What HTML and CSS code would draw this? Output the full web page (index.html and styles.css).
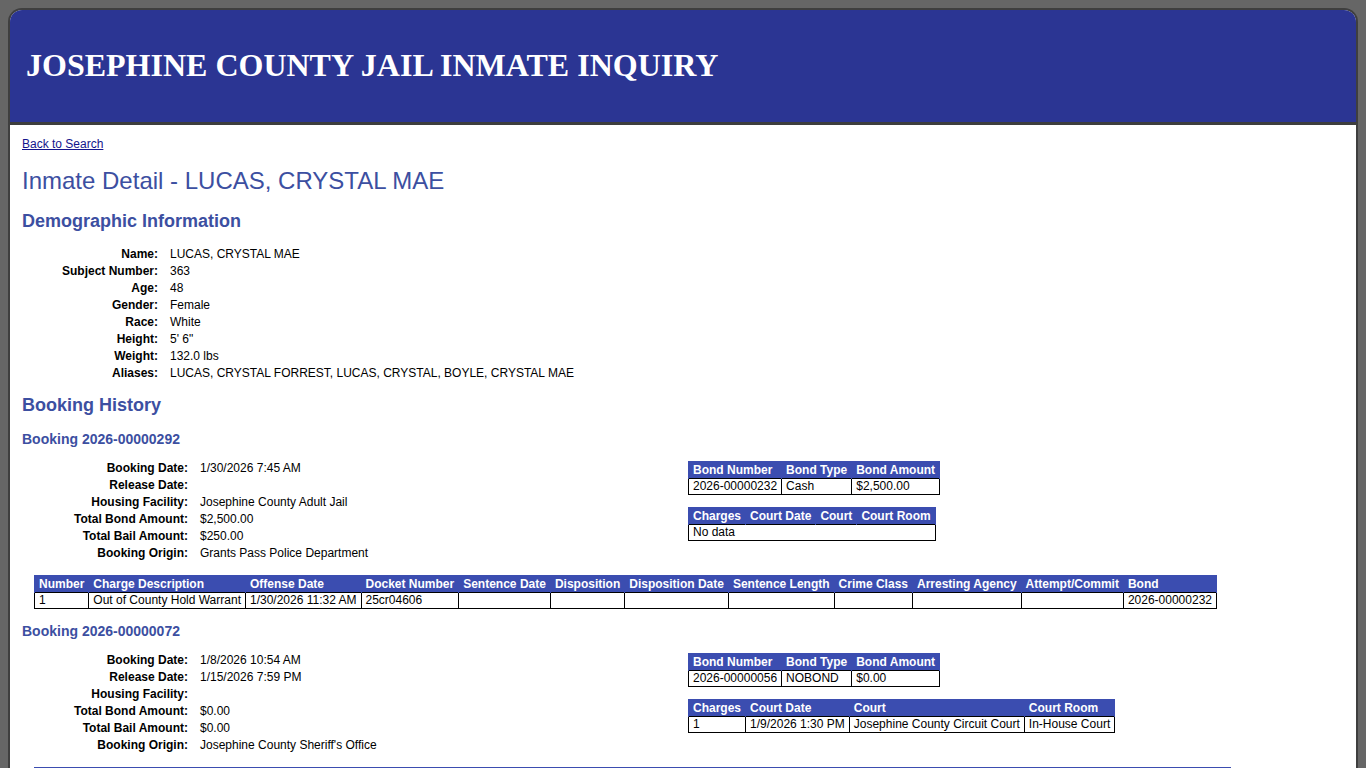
FILE: index.html
```html
<!DOCTYPE html>
<html>
<head>
<meta charset="utf-8">
<title>Josephine County Jail Inmate Inquiry</title>
<link rel="stylesheet" href="styles.css">
</head>
<body>
<div class="page">
  <div class="banner">
    <div class="banner-title">JOSEPHINE COUNTY JAIL INMATE INQUIRY</div>
  </div>
  <div class="content">
    <a class="back" href="#">Back to Search</a>
    <h1 class="title">Inmate Detail - LUCAS, CRYSTAL MAE</h1>
    <h2 class="section">Demographic Information</h2>
    <table class="info demo">
      <tr><th>Name:</th><td>LUCAS, CRYSTAL MAE</td></tr>
      <tr><th>Subject Number:</th><td>363</td></tr>
      <tr><th>Age:</th><td>48</td></tr>
      <tr><th>Gender:</th><td>Female</td></tr>
      <tr><th>Race:</th><td>White</td></tr>
      <tr><th>Height:</th><td>5' 6"</td></tr>
      <tr><th>Weight:</th><td>132.0 lbs</td></tr>
      <tr><th>Aliases:</th><td>LUCAS, CRYSTAL FORREST, LUCAS, CRYSTAL, BOYLE, CRYSTAL MAE</td></tr>
    </table>

    <h2 class="section history">Booking History</h2>

    <h3 class="booking-title first">Booking 2026-00000292</h3>
    <div class="booking">
      <div class="booking-top">
        <table class="info book">
          <tr><th>Booking Date:</th><td>1/30/2026 7:45 AM</td></tr>
          <tr><th>Release Date:</th><td></td></tr>
          <tr><th>Housing Facility:</th><td>Josephine County Adult Jail</td></tr>
          <tr><th>Total Bond Amount:</th><td>$2,500.00</td></tr>
          <tr><th>Total Bail Amount:</th><td>$250.00</td></tr>
          <tr><th>Booking Origin:</th><td>Grants Pass Police Department</td></tr>
        </table>
        <div class="side">
          <table class="grid">
            <tr><th>Bond Number</th><th>Bond Type</th><th>Bond Amount</th></tr>
            <tr><td>2026-00000232</td><td>Cash</td><td>$2,500.00</td></tr>
          </table>
          <table class="grid">
            <tr><th>Charges</th><th>Court Date</th><th>Court</th><th>Court Room</th></tr>
            <tr><td colspan="4">No data</td></tr>
          </table>
        </div>
      </div>
      <table class="grid charges">
        <tr><th>Number</th><th>Charge Description</th><th>Offense Date</th><th>Docket Number</th><th>Sentence Date</th><th>Disposition</th><th>Disposition Date</th><th>Sentence Length</th><th>Crime Class</th><th>Arresting Agency</th><th>Attempt/Commit</th><th>Bond</th></tr>
        <tr><td>1</td><td>Out of County Hold Warrant</td><td>1/30/2026 11:32 AM</td><td>25cr04606</td><td></td><td></td><td></td><td></td><td></td><td></td><td></td><td>2026-00000232</td></tr>
      </table>
    </div>

    <h3 class="booking-title">Booking 2026-00000072</h3>
    <div class="booking">
      <div class="booking-top">
        <table class="info book">
          <tr><th>Booking Date:</th><td>1/8/2026 10:54 AM</td></tr>
          <tr><th>Release Date:</th><td>1/15/2026 7:59 PM</td></tr>
          <tr><th>Housing Facility:</th><td></td></tr>
          <tr><th>Total Bond Amount:</th><td>$0.00</td></tr>
          <tr><th>Total Bail Amount:</th><td>$0.00</td></tr>
          <tr><th>Booking Origin:</th><td>Josephine County Sheriff's Office</td></tr>
        </table>
        <div class="side">
          <table class="grid">
            <tr><th>Bond Number</th><th>Bond Type</th><th>Bond Amount</th></tr>
            <tr><td>2026-00000056</td><td>NOBOND</td><td>$0.00</td></tr>
          </table>
          <table class="grid">
            <tr><th>Charges</th><th>Court Date</th><th>Court</th><th>Court Room</th></tr>
            <tr><td>1</td><td>1/9/2026 1:30 PM</td><td>Josephine County Circuit Court</td><td>In-House Court</td></tr>
          </table>
        </div>
      </div>
      <table class="grid charges wide">
        <tr><th>Number</th><th>Charge Description</th><th>Offense Date</th><th>Docket Number</th><th>Sentence Date</th><th>Disposition</th><th>Disposition Date</th><th>Sentence Length</th><th>Crime Class</th><th>Arresting Agency</th><th>Attempt/Commit</th><th>Bond</th></tr>
        <tr><td>1</td><td></td><td></td><td></td><td></td><td></td><td></td><td></td><td></td><td></td><td></td><td>2026-00000056</td></tr>
      </table>
    </div>
  </div>
</div>
</body>
</html>
```

FILE: styles.css
```css
html, body {
  background: #666666;
}
body {
  margin: 8px;
  font-family: "Liberation Sans", Arial, sans-serif;
  font-size: 12px;
  color: #000;
}
.page {
  background: #ffffff;
  border: 2px solid #3f3f3f;
  border-bottom: none;
  border-radius: 14px 14px 0 0;
  overflow: hidden;
}
.banner {
  background: #2b3593;
  height: 112px;
  border-bottom: 3px solid #3d3d3d;
  display: flex;
  align-items: center;
  padding-left: 16px;
}
.banner-title {
  font-family: "Liberation Serif", "Times New Roman", serif;
  font-weight: bold;
  font-size: 32px;
  color: #ffffff;
  line-height: 36px;
  margin-top: -2px;
}
.content {
  padding: 12px 12px 40px 12px;
}
.back {
  display: block;
  width: max-content;
  line-height: 14px;
  color: #14148c;
  text-decoration: underline;
}
.title {
  margin: 16px 0 0 0;
  font-size: 24px;
  line-height: 28px;
  font-weight: normal;
  color: #3c4fa1;
}
.section {
  margin: 15px 0 0 0;
  font-size: 18px;
  line-height: 22px;
  font-weight: bold;
  color: #3c4fa1;
}
.section.history {
  margin-top: 12px;
}
.booking-title {
  margin: 13px 0 0 0;
  font-size: 14px;
  line-height: 18px;
  font-weight: bold;
  color: #3c4fa1;
}
.booking-title.first {
  margin-top: 14px;
}
.info {
  border-collapse: collapse;
}
.info th, .info td {
  padding: 0;
  line-height: 17px;
  height: 17px;
  vertical-align: middle;
  font-size: 12px;
}
.info th {
  text-align: right;
  font-weight: bold;
  white-space: nowrap;
}
.info td {
  text-align: left;
  padding-left: 12px;
}
.demo {
  margin-top: 14px;
}
.demo th {
  width: 136px;
}
.booking {
  margin-left: 12px;
}
.booking-top {
  display: grid;
  grid-template-columns: 654px auto;
  align-items: start;
  margin-top: 12px;
}
.book th {
  width: 154px;
}
.side {
  display: flex;
  flex-direction: column;
  align-items: flex-start;
  gap: 12px;
  padding-top: 1px;
}
.grid {
  border-collapse: collapse;
}
.grid th {
  background: #3b4db0;
  color: #ffffff;
  font-weight: bold;
  text-align: left;
  padding: 1px 4px;
  line-height: 14px;
  white-space: nowrap;
  border: 1px solid #3b4db0;
  border-bottom: none;
}
.grid td {
  border: 1px solid #000000;
  padding: 0 4px 1px 4px;
  line-height: 14px;
  white-space: nowrap;
  text-align: left;
}
.charges {
  margin-top: 13px;
}
.charges.wide {
  margin-top: 13px;
}
.wide th:nth-child(2) {
  min-width: 194px;
}
```
